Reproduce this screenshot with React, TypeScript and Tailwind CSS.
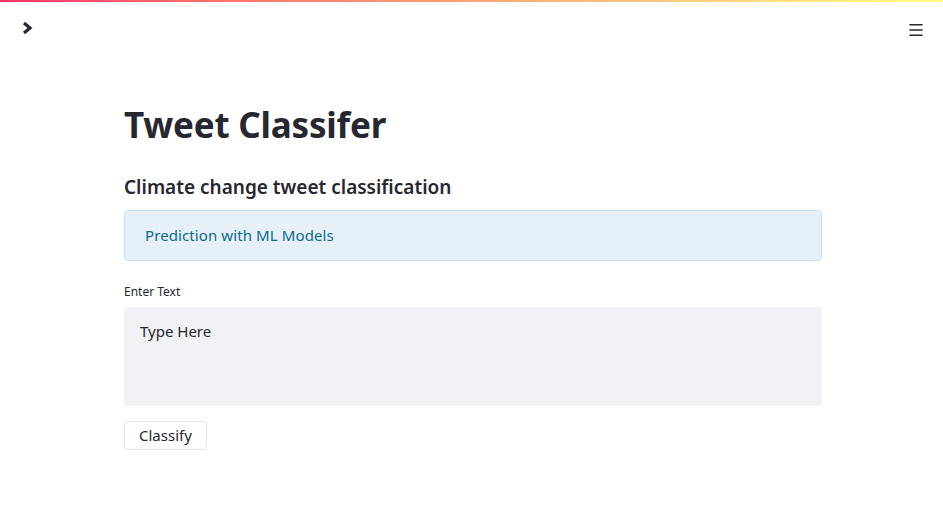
import { Menu } from "lucide-react";

const App = () => {
  return (
    <div
      className="min-h-[527px] bg-white text-[#262730]"
      style={{ fontFamily: '"Noto Sans", "Open Sans", sans-serif' }}
    >
      <div className="h-[2px] bg-gradient-to-r from-[#f63366] to-[#fffd80]" />

      <header className="flex items-start justify-between px-[20px] pt-[16px]">
        <svg width="14" height="16" viewBox="0 0 14 16" className="mt-[2px] ml-[1px]">
          <path d="M3 3 L9 8 L3 13" fill="none" stroke="#262730" strokeWidth="3.2" strokeLinejoin="miter" />
        </svg>
        <Menu className="w-[18px] h-[18px] mt-[3px] mr-[-2px]" strokeWidth={2} color="#262730" />
      </header>

      <main className="ml-[124px] w-[698px] pt-[60px]">
        <h1 className="text-[35px] font-bold leading-[52px] tracking-[-0.2px]">Tweet Classifer</h1>

        <h3 className="mt-[22px] text-[19px] font-semibold leading-[28px]">
          Climate change tweet classification
        </h3>

        <div className="mt-[9px] h-[51px] rounded-[4px] border border-[#c8dff2] bg-[#e6f0f9] px-[20px] flex items-center">
          <p className="text-[15px] text-[#0b6a8f] tracking-[0.1px]">Prediction with ML Models</p>
        </div>

        <label className="block mt-[23px] text-[12px] leading-[16px]">Enter Text</label>

        <div className="mt-[7px] h-[99px] rounded-[4px] bg-[#f0f2f6] px-[16px] pt-[13px]">
          <p className="text-[15px] leading-[22px]">Type Here</p>
        </div>

        <button className="mt-[15px] h-[29px] rounded-[4px] border border-[#e1e4ea] bg-white px-[14px] text-[15px] leading-none">
          Classify
        </button>
      </main>
    </div>
  );
};

export default App;
